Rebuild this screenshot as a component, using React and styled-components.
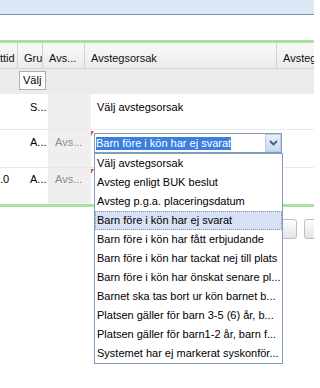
import React from "react";
import styled, { createGlobalStyle } from "styled-components";

const Global = createGlobalStyle`
  html, body { margin: 0; padding: 0; background: #fff; overflow: hidden; }
  body {
    width: 314px; height: 388px;
    font-family: "Liberation Sans", Arial, sans-serif;
    font-size: 11px; color: #000;
  }
  * { box-sizing: border-box; }
`;

const TopBar = styled.div`
  height: 15px;
  background: #dce9f5;
  border-bottom: 1px solid #6d93b6;
`;

const Spacer = styled.div`
  height: 25px;
`;

const Grid = styled.div`
  border-top: 3px solid #a8e29e;
  border-bottom: 3px solid #a8e29e;
`;

const HeaderRow = styled.div`
  display: grid;
  grid-template-columns: 18px 25px 42px 192px 1fr;
  height: 26px;
  background: linear-gradient(#f8f8f8, #ececec);
  border-bottom: 1px solid #d4d4d4;
`;

const HeaderCell = styled.div`
  display: flex;
  align-items: center;
  padding: 5px 0 0 ${(p) => p.$pad}px;
  border-right: 1px solid #d2d2d2;
  white-space: nowrap;
  overflow: hidden;
  color: #111;
  &:last-child { border-right: none; }
`;

const FilterRow = styled.div`
  display: grid;
  grid-template-columns: 19px 1fr;
  height: 25px;
  background: #ebebeb;
`;

const FilterInput = styled.div`
  grid-column: 2;
  width: 27px;
  height: 19px;
  margin-top: 2px;
  border: 1px solid #a6aeb8;
  background: #fff;
  padding-left: 3px;
  line-height: 17px;
`;

const DataRow = styled.div`
  display: grid;
  grid-template-columns: 28px 20px 43px 191px 1fr;
  height: ${(p) => p.$h}px;
  border-bottom: ${(p) => (p.$last ? "none" : "1px solid #e8e8e8")};
`;

const DataCell = styled.div`
  position: relative;
  padding: ${(p) => p.$top}px 0 0 ${(p) => p.$pad || 0}px;
  line-height: 13px;
  white-space: nowrap;
  color: ${(p) => (p.$muted ? "#8c8c8c" : "#000")};
  background: ${(p) => (p.$grey ? "#efefef" : "transparent")};
  ${(p) =>
    p.$dirty &&
    `&::before {
      content: "";
      position: absolute;
      top: 1px; left: 0;
      border-top: 5px solid #e04848;
      border-right: 3px solid transparent;
    }`}
`;

const SelectBox = styled.div`
  position: relative;
  margin: 3px 0 0 3px;
  width: 188px;
  height: 20px;
  border: 1px solid #7f9db9;
  background: #fff;
  display: flex;
  align-items: center;
`;

const SelectedText = styled.span`
  margin-left: 1px;
  background: #3b7fe0;
  color: #fff;
  line-height: 13px;
`;

const ArrowButton = styled.div`
  margin-left: auto;
  width: 16px;
  height: 18px;
  display: flex;
  align-items: center;
  justify-content: center;
  background: linear-gradient(#e9effa, #c9d8f2);
  border: 1px solid #bccde9;
`;

const DropList = styled.div`
  position: absolute;
  top: 19px;
  left: -1px;
  width: 189px;
  border: 1px solid #7f9db9;
  background: #fff;
  z-index: 10;
`;

const DropItem = styled.div`
  height: 19px;
  line-height: ${(p) => (p.$active ? 17 : 19)}px;
  padding: 0 2px 0 ${(p) => (p.$active ? 1 : 2)}px;
  white-space: nowrap;
  overflow: hidden;
  background: ${(p) => (p.$active ? "#d8e0f3" : "#fff")};
  border: ${(p) => (p.$active ? "1px dotted #8090b8" : "none")};
`;

const ButtonBar = styled.div`
  display: flex;
  justify-content: flex-end;
  gap: 7px;
  padding-top: 12px;
  margin-right: -13px;
`;

const PageButton = styled.div`
  width: 23px;
  height: 20px;
  border: 1px solid #bdbdbd;
  border-radius: 3px;
  background: linear-gradient(#fdfdfd, #e4e4e4);
`;

const options = [
  "Välj avstegsorsak",
  "Avsteg enligt BUK beslut",
  "Avsteg p.g.a. placeringsdatum",
  "Barn före i kön har ej svarat",
  "Barn före i kön har fått erbjudande",
  "Barn före i kön har tackat nej till plats",
  "Barn före i kön har önskat senare pl...",
  "Barnet ska tas bort ur kön barnet b...",
  "Platsen gäller för barn 3-5 (6) år, b...",
  "Platsen gäller för barn1-2 år, barn f...",
  "Systemet har ej markerat syskonför...",
];

const Chevron = () => (
  <svg width="9" height="6" viewBox="0 0 9 6">
    <path d="M1 1 L4.5 4.5 L8 1" fill="none" stroke="#4a5c80" strokeWidth="1.8" />
  </svg>
);

export default function App() {
  return (
    <>
      <Global />
      <TopBar />
      <Spacer />
      <Grid>
        <HeaderRow>
          <HeaderCell $pad={0}>ttid</HeaderCell>
          <HeaderCell $pad={6}>Gru</HeaderCell>
          <HeaderCell $pad={6}>Avs...</HeaderCell>
          <HeaderCell $pad={6}>Avstegsorsak</HeaderCell>
          <HeaderCell $pad={6}>Avsteg</HeaderCell>
        </HeaderRow>
        <FilterRow>
          <FilterInput>Välj</FilterInput>
        </FilterRow>
        <DataRow $h={36}>
          <DataCell $top={7} />
          <DataCell $top={7} $pad={2}>S...</DataCell>
          <DataCell $top={7} $grey />
          <DataCell $top={7} $pad={6}>Välj avstegsorsak</DataCell>
          <DataCell $top={7} />
        </DataRow>
        <DataRow $h={38}>
          <DataCell $top={6} />
          <DataCell $top={6} $pad={2}>A...</DataCell>
          <DataCell $top={6} $pad={7} $grey $muted>Avs...</DataCell>
          <DataCell $top={0} $dirty>
            <SelectBox>
              <SelectedText>Barn före i kön har ej svarat</SelectedText>
              <ArrowButton>
                <Chevron />
              </ArrowButton>
              <DropList>
                {options.map((o, i) => (
                  <DropItem key={o} $active={i === 3}>
                    {o}
                  </DropItem>
                ))}
              </DropList>
            </SelectBox>
          </DataCell>
          <DataCell $top={6} />
        </DataRow>
        <DataRow $h={36} $last>
          <DataCell $top={5}>.0</DataCell>
          <DataCell $top={5} $pad={2}>A...</DataCell>
          <DataCell $top={5} $pad={7} $grey $muted>Avs...</DataCell>
          <DataCell $top={5} $dirty />
          <DataCell $top={5} />
        </DataRow>
      </Grid>
      <ButtonBar>
        <PageButton />
        <PageButton />
      </ButtonBar>
    </>
  );
}
